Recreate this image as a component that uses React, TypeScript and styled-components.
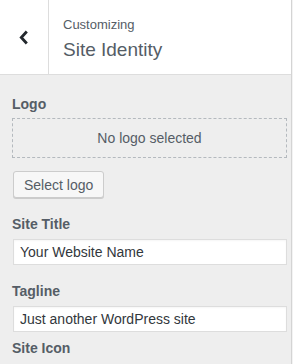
import styled, { createGlobalStyle } from 'styled-components';

const GlobalStyle = createGlobalStyle`
  html, body {
    margin: 0;
    padding: 0;
    background: #f3f3f3;
  }
  body {
    font-family: "Liberation Sans", Arial, sans-serif;
  }
`;

const colors = {
  text: '#555d66',
  dark: '#23282d',
  input: '#32373c',
  border: '#dddddd',
  panel: '#eeeeee',
};

type Field = {
  label: string;
  value: string;
};

const fields: Field[] = [
  { label: 'Site Title', value: 'Your Website Name' },
  { label: 'Tagline', value: 'Just another WordPress site' },
];

function App() {
  return (
    <>
      <GlobalStyle />
      <StyledPanel>
        <StyledHeader>
          <StyledBackButton aria-label="Back">
            <svg width="10" height="15" viewBox="0 0 10 15">
              <polyline
                points="7.8,1.5 2.3,7.5 7.8,13.5"
                fill="none"
                stroke={colors.dark}
                strokeWidth="2.8"
              />
            </svg>
          </StyledBackButton>
          <StyledTitleBlock>
            <StyledKicker>Customizing</StyledKicker>
            <StyledTitle>Site Identity</StyledTitle>
          </StyledTitleBlock>
        </StyledHeader>

        <StyledSection>
          <StyledLabel>Logo</StyledLabel>
          <StyledPlaceholder>No logo selected</StyledPlaceholder>
          <StyledButton type="button">Select logo</StyledButton>

          {fields.map((field) => (
            <StyledField key={field.label}>
              <StyledLabel>{field.label}</StyledLabel>
              <StyledInput defaultValue={field.value} />
            </StyledField>
          ))}

          <StyledLabel $gap={6}>Site Icon</StyledLabel>
        </StyledSection>
      </StyledPanel>
    </>
  );
}

const StyledPanel = styled.div`
  width: 291px;
  height: 364px;
  border-right: 1px solid #d4d4d4;
  background: ${colors.panel};
  overflow: hidden;
`;

const StyledHeader = styled.header`
  display: flex;
  height: 74px;
  background: #fff;
  border-bottom: 1px solid ${colors.border};
`;

const StyledBackButton = styled.button`
  display: flex;
  align-items: center;
  justify-content: center;
  width: 49px;
  padding: 0 1px 0 0;
  margin: 0;
  border: 0;
  border-right: 1px solid ${colors.border};
  background: #fff;
`;

const StyledTitleBlock = styled.div`
  display: flex;
  flex-direction: column;
  padding: 17px 0 0 14px;
  color: ${colors.text};
`;

const StyledKicker = styled.span`
  font-size: 13px;
  line-height: 16px;
`;

const StyledTitle = styled.span`
  margin-top: 5px;
  font-size: 19px;
  line-height: 24px;
`;

const StyledSection = styled.div`
  display: flex;
  flex-direction: column;
  align-items: flex-start;
  padding: 19px 4px 0 12px;
`;

const StyledLabel = styled.div<{ $gap?: number }>`
  margin-top: ${({ $gap = 0 }) => $gap}px;
  font-size: 14px;
  line-height: 20px;
  font-weight: 700;
  color: ${colors.text};
`;

const StyledPlaceholder = styled.div`
  align-self: stretch;
  box-sizing: border-box;
  height: 40px;
  margin-top: 4px;
  border: 1px dashed #b4b9be;
  display: flex;
  align-items: center;
  justify-content: center;
  font-size: 14px;
  color: ${colors.text};
`;

const StyledButton = styled.button`
  box-sizing: border-box;
  height: 27px;
  margin: 13px 0 0 1px;
  padding: 0 10px;
  border: 1px solid #cccccc;
  border-radius: 3px;
  background: #f7f7f7;
  box-shadow: 0 1px 0 #cccccc;
  font-family: inherit;
  font-size: 14px;
  color: ${colors.text};
`;

const StyledField = styled.div`
  display: flex;
  flex-direction: column;
  align-self: stretch;
  margin-top: 16px;
`;

const StyledInput = styled.input`
  box-sizing: border-box;
  height: 26px;
  margin: 5px 0 0 1px;
  padding: 0 6px;
  border: 1px solid ${colors.border};
  background: #fff;
  box-shadow: inset 0 1px 2px rgba(0, 0, 0, 0.04);
  font-family: inherit;
  font-size: 14px;
  color: ${colors.input};
  outline: none;
`;

export default App;
